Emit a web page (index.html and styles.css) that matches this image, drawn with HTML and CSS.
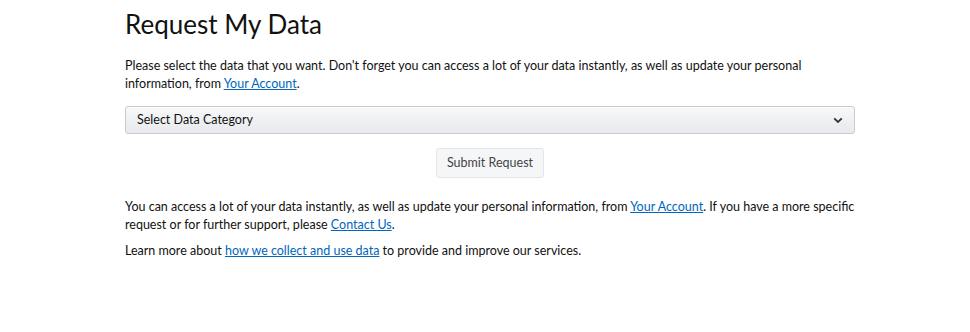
FILE: index.html
```html
<!DOCTYPE html>
<html lang="en">
  <head>
    <meta charset="UTF-8">
    <title>Request My Data</title>
    <link rel="stylesheet" href="styles.css">
  </head>
  <body>
    <main class="page">
      <h1 class="title">Request My Data</h1>
      <p class="intro">Please select the data that you want. Don't forget you can access a lot of your data instantly, as well as update your personal information, from <a href="#">Your Account</a>.</p>
      <div class="select">
        <span>Select Data Category</span>
        <svg class="chevron" width="10" height="7" viewBox="0 0 10 7">
          <path d="M1.2 1.3 L5 5 L8.8 1.3" fill="none" stroke="#333" stroke-width="1.8"/>
        </svg>
      </div>
      <div class="actions">
        <button class="submit">Submit Request</button>
      </div>
      <p class="note">You can access a lot of your data instantly, as well as update your personal information, from <a href="#">Your Account</a>. If you have a more specific request or for further support, please <a href="#">Contact Us</a>.</p>
      <p class="note">Learn more about <a href="#">how we collect and use data</a> to provide and improve our services.</p>
    </main>
  </body>
</html>
```

FILE: styles.css
```css
body {
  margin: 0;
  background: #fff;
  color: #111;
  font-family: Lato, "Noto Sans", sans-serif;
  font-size: 12.5px;
  line-height: 18px;
}

.page {
  width: 730px;
  margin-left: 125px;
  padding-top: 6px;
}

.title {
  font-size: 26px;
  font-weight: 400;
  line-height: 36px;
  margin: 0 0 15px;
}

p {
  margin: 0;
}

a {
  color: #0066c0;
  text-decoration: underline;
}

.intro {
  margin-bottom: 13px;
}

.select {
  display: flex;
  align-items: center;
  justify-content: space-between;
  height: 26px;
  padding: 0 11px;
  border: 1px solid #c9cbce;
  border-radius: 3px;
  background: linear-gradient(#f7f8fa, #e7e9ec);
  box-shadow: 0 1px 0 rgba(255, 255, 255, 0.6) inset;
}

.chevron {
  display: block;
}

.actions {
  display: flex;
  justify-content: center;
  margin: 14px 0 20px;
}

.submit {
  font: inherit;
  color: #444;
  height: 30px;
  padding: 0 10px;
  border: 1px solid #e3e5e8;
  border-radius: 3px;
  background: #f5f6f7;
}

.note {
  margin-bottom: 8px;
}
```
